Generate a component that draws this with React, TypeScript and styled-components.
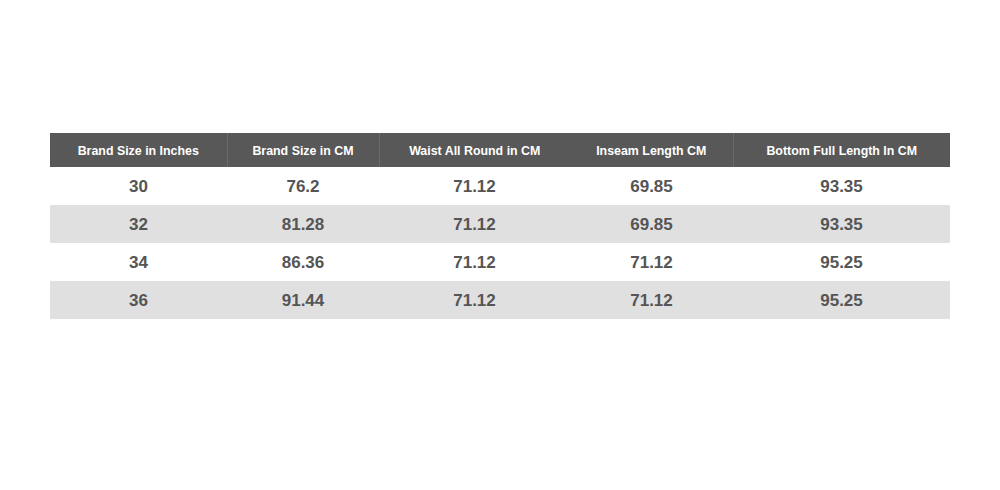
import React from 'react';
import styled, { createGlobalStyle } from 'styled-components';

const COLUMNS: Array<{ title: string; width: number }> = [
  { title: 'Brand Size in Inches', width: 177 },
  { title: 'Brand Size in CM', width: 152 },
  { title: 'Waist All Round in CM', width: 191 },
  { title: 'Inseam Length CM', width: 163 },
  { title: 'Bottom Full Length In CM', width: 217 },
];

const ROWS: Array<Array<string>> = [
  ['30', '76.2', '71.12', '69.85', '93.35'],
  ['32', '81.28', '71.12', '69.85', '93.35'],
  ['34', '86.36', '71.12', '71.12', '95.25'],
  ['36', '91.44', '71.12', '71.12', '95.25'],
];

const GlobalStyle = createGlobalStyle`
  html, body {
    margin: 0;
    padding: 0;
    background: #ffffff;
    font-family: "Liberation Sans", Arial, sans-serif;
  }
`;

const Page = styled.div`
  width: 1000px;
  height: 490px;
  padding: 133px 50px 0;
  box-sizing: border-box;
`;

const Table = styled.table`
  width: 900px;
  border-collapse: collapse;
  table-layout: fixed;
`;

const HeadCell = styled.th<{ $divider: boolean }>`
  height: 34px;
  padding: 1px 0 0;
  box-sizing: border-box;
  background: #585858;
  color: #ffffff;
  font-size: 12.4px;
  font-weight: bold;
  text-align: center;
  border-left: ${(p) => (p.$divider ? '1px solid #6a6a6a' : 'none')};
`;

const Row = styled.tr<{ $striped: boolean }>`
  background: ${(p) => (p.$striped ? '#e0e0e0' : '#ffffff')};
`;

const Cell = styled.td`
  height: 38px;
  padding: 1px 0 0;
  box-sizing: border-box;
  color: #555555;
  font-size: 17px;
  font-weight: bold;
  text-align: center;
`;

function App() {
  return (
    <Page>
      <GlobalStyle />
      <Table>
        <colgroup>
          {COLUMNS.map((col) => (
            <col key={col.title} style={{ width: col.width }} />
          ))}
        </colgroup>
        <thead>
          <tr>
            {COLUMNS.map((col, index) => (
              <HeadCell key={col.title} $divider={index !== 0 && index !== 3}>
                {col.title}
              </HeadCell>
            ))}
          </tr>
        </thead>
        <tbody>
          {ROWS.map((row, index) => (
            <Row key={row[0]} $striped={index % 2 === 1}>
              {row.map((value, i) => (
                <Cell key={i}>{value}</Cell>
              ))}
            </Row>
          ))}
        </tbody>
      </Table>
    </Page>
  );
}

export default App;
